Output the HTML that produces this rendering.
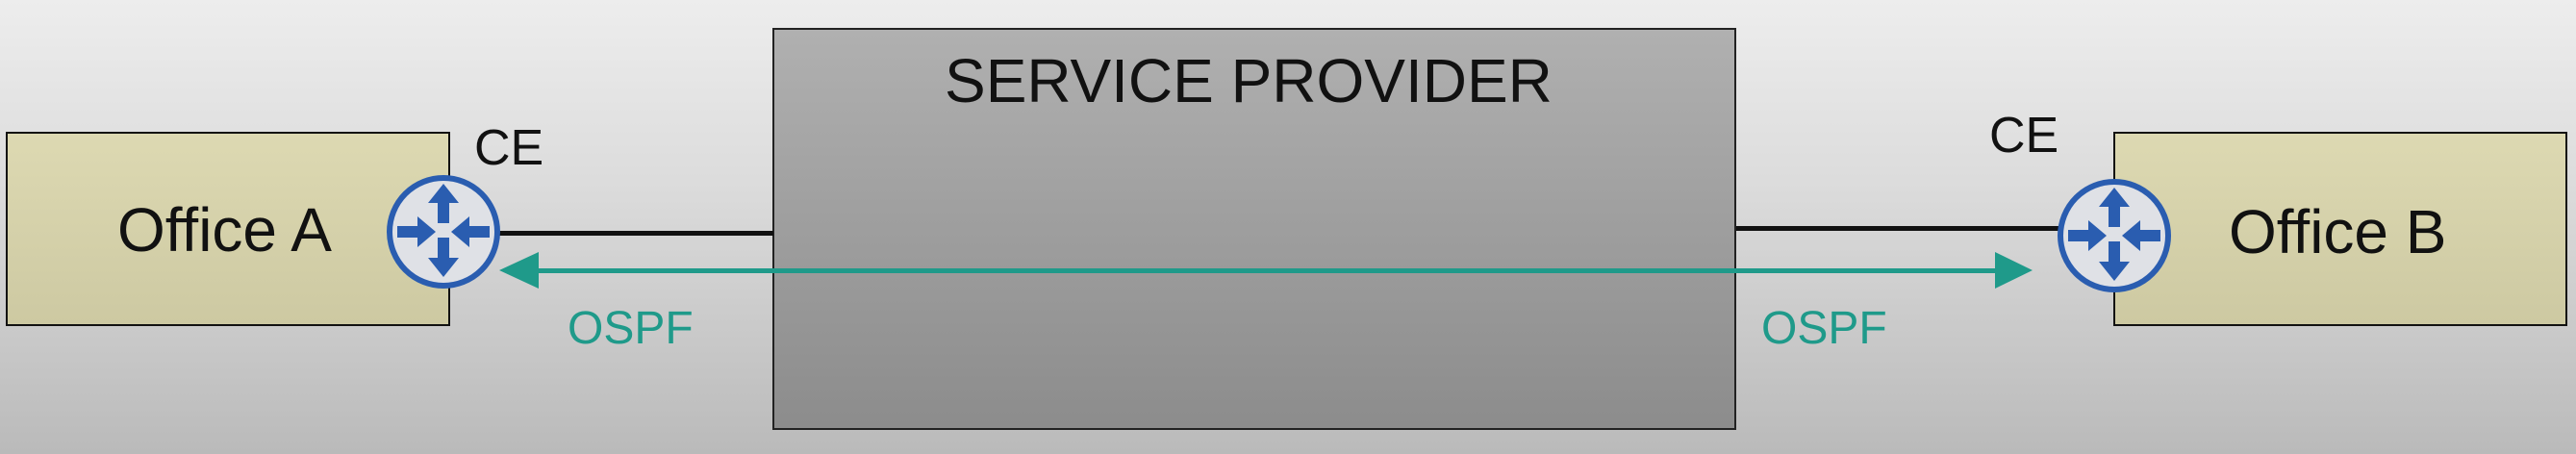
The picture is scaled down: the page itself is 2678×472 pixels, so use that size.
<!DOCTYPE html>
<html><head><style>
html,body{margin:0;padding:0}
body{width:2678px;height:472px;position:relative;overflow:hidden;background:linear-gradient(#ededed,#dcdcdc 40%,#bababa);font-family:"Liberation Sans",sans-serif}
.t{position:absolute;white-space:nowrap;line-height:1}
.office{position:absolute;border:2px solid #111;background:linear-gradient(#ddd9b2,#cdc9a2);box-sizing:border-box}
</style></head><body>
<div class="office" style="left:6px;top:137px;width:462px;height:202px"></div>
<div class="office" style="left:2197px;top:137px;width:472px;height:202px"></div>
<div style="position:absolute;left:803px;top:29px;width:1002px;height:418px;box-sizing:border-box;border:2px solid #222;background:linear-gradient(#b0b0b0,#8c8c8c)"></div>
<svg width="2678" height="472" style="position:absolute;left:0;top:0">
<defs>
<g id="r">
<circle r="56" fill="#dfe1e6" stroke="#2a5db0" stroke-width="6"/>
<g fill="#2a5db0">
<path d="M0-50L16-30H6V-9H-6V-30H-16Z"/>
<path d="M0 47L16 27H6V6H-6V27H-16Z"/>
<path d="M-8 0L-27-16V-6H-48V6H-27V16Z"/>
<path d="M8 0L27-16V-6H48V6H27V16Z"/>
</g>
</g>
</defs>
<rect x="518" y="240" width="286" height="5" fill="#111"/>
<rect x="1805" y="235" width="340" height="5" fill="#111"/>
<rect x="555" y="279" width="1525" height="5" fill="#1f9a8a"/>
<path d="M519 281L560 262V300Z" fill="#1f9a8a"/>
<path d="M2113 281L2074 262V300Z" fill="#1f9a8a"/>
<use href="#r" x="461" y="241"/>
<use href="#r" x="2198" y="245"/>
</svg>
<div class="t" style="left:982px;top:52px;font-size:64px;color:#111">SERVICE PROVIDER</div>
<div class="t" style="left:122px;top:207px;font-size:64px;color:#111">Office A</div>
<div class="t" style="left:2317px;top:209px;font-size:64px;color:#111">Office B</div>
<div class="t" style="left:493px;top:128px;font-size:52px;color:#111">CE</div>
<div class="t" style="left:2068px;top:115px;font-size:52px;color:#111">CE</div>
<div class="t" style="left:590px;top:318px;font-size:48px;color:#1f9a8a">OSPF</div>
<div class="t" style="left:1831px;top:318px;font-size:48px;color:#1f9a8a">OSPF</div>
</body></html>
